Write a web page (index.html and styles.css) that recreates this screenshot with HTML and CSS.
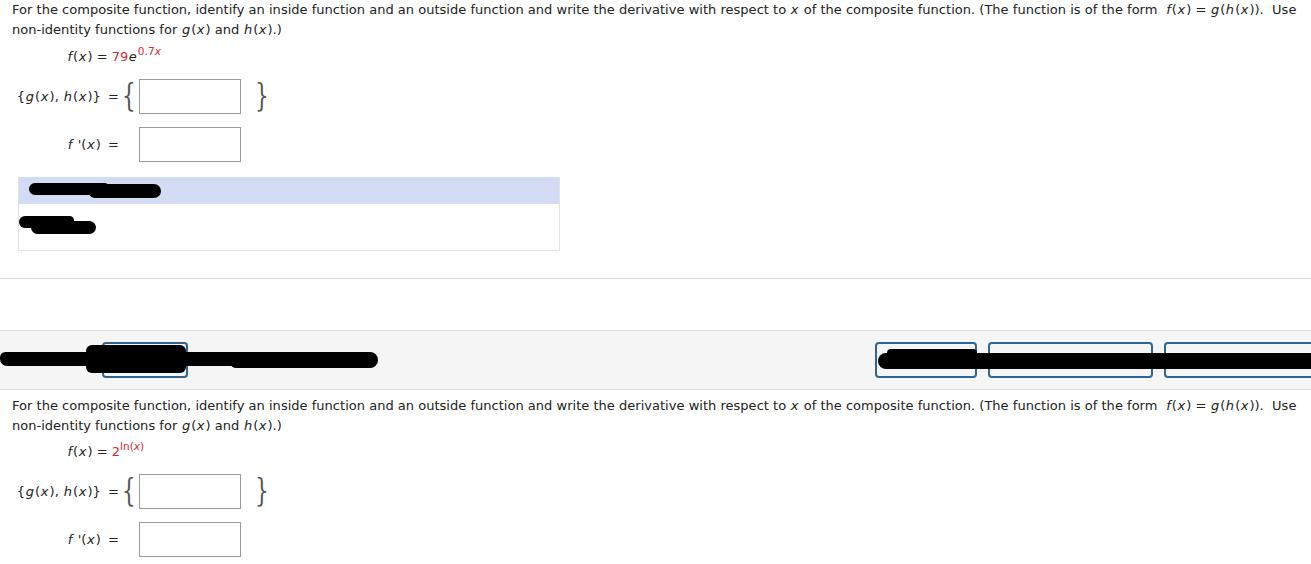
FILE: index.html
```html
<!DOCTYPE html>
<html>
<head>
<meta charset="utf-8">
<link rel="stylesheet" href="styles.css">
</head>
<body>
<section class="question q1">
  <p class="prompt">For the composite function, identify an inside function and an outside function and write the derivative with respect to <i>x</i> of the composite function. (The function is of the form&nbsp; <i>f</i>(<i>x</i>) = <i>g</i>(<i>h</i>(<i>x</i>)).&nbsp; Use non-identity functions for <i>g</i>(<i>x</i>) and <i>h</i>(<i>x</i>).)</p>
  <div class="formula"><i>f</i>(<i>x</i>) = <span class="red">79</span><i>e</i><sup class="red">0.7<i>x</i></sup></div>
  <div class="row">
    <span class="label">{<i>g</i>(<i>x</i>), <i>h</i>(<i>x</i>)}</span><span class="eq">=</span><span class="brace">{</span><span class="box"></span><span class="brace close">}</span>
  </div>
  <div class="row">
    <span class="label"><i>f</i> '(<i>x</i>)</span><span class="eq">=</span><span class="brace"></span><span class="box"></span>
  </div>
  <div class="hint">
    <div class="hint-head"><span class="blob b1"></span><span class="blob b1b"></span></div>
    <div class="hint-body"><span class="blob b2"></span><span class="blob b2b"></span></div>
  </div>
</section>
<hr class="sep">
<div class="toolbar">
  <div class="tools-left">
    <span class="btn btn-a"></span>
    <span class="blob b3"></span>
    <span class="blob b3b"></span>
    <span class="blob b3c"></span>
  </div>
  <div class="tools-right">
    <span class="btn btn-b"></span>
    <span class="btn btn-c"></span>
    <span class="btn btn-d"></span>
    <span class="blob b4"></span>
    <span class="blob b4b"></span>
  </div>
</div>
<section class="question q2">
  <p class="prompt">For the composite function, identify an inside function and an outside function and write the derivative with respect to <i>x</i> of the composite function. (The function is of the form&nbsp; <i>f</i>(<i>x</i>) = <i>g</i>(<i>h</i>(<i>x</i>)).&nbsp; Use non-identity functions for <i>g</i>(<i>x</i>) and <i>h</i>(<i>x</i>).)</p>
  <div class="formula"><i>f</i>(<i>x</i>) = <span class="red">2</span><sup class="red">ln(<i>x</i>)</sup></div>
  <div class="row">
    <span class="label">{<i>g</i>(<i>x</i>), <i>h</i>(<i>x</i>)}</span><span class="eq">=</span><span class="brace">{</span><span class="box"></span><span class="brace close">}</span>
  </div>
  <div class="row">
    <span class="label"><i>f</i> '(<i>x</i>)</span><span class="eq">=</span><span class="brace"></span><span class="box"></span>
  </div>
</section>
</body>
</html>
```

FILE: styles.css
```css
html, body {
  margin: 0;
  padding: 0;
  background: #fff;
}
body {
  font-family: "DejaVu Sans", Verdana, sans-serif;
  font-size: 13px;
  letter-spacing: 0.02px;
  color: #222;
  overflow: hidden;
}
i {
  padding: 0 1px 0 0.5px;
}
sup i {
  padding: 0;
}
.question {
  padding: 0 12px;
}
.prompt {
  margin: 0;
  line-height: 20px;
}
.formula {
  margin: 7px 0 0 55px;
  line-height: 20px;
  height: 20px;
}
.formula sup {
  font-size: 10.5px;
  vertical-align: 6px;
  line-height: 0;
}
.red {
  color: #d22a36;
}
.row {
  display: flex;
  align-items: center;
  height: 35px;
  margin-top: 12px;
}
.row + .row {
  margin-top: 13px;
}
.label {
  width: 89px;
  text-align: right;
  letter-spacing: 0.1px;
}
.eq {
  margin: 0 3px 0 7px;
}
.brace {
  width: 17px;
  font-family: "DejaVu Serif", serif;
  font-weight: 200;
  font-size: 31px;
  line-height: 35px;
  color: #555;
  transform: scale(0.7, 1.05);
  transform-origin: left center;
  text-align: left;
  margin-top: -4px;
}
.brace.close {
  margin-left: 14px;
}
.box {
  width: 100px;
  height: 33px;
  border: 1px solid #9a9a9a;
  background: #fff;
}
.hint {
  margin: 15px 0 0 6px;
  width: 540px;
  border: 1px solid #e2e2e2;
  border-top: none;
}
.hint-head {
  position: relative;
  height: 27px;
  background: #d4dcf5;
}
.hint-body {
  position: relative;
  height: 46px;
  background: #fff;
}
.blob {
  position: absolute;
  background: #000;
  border-radius: 8px;
}
.b1 {
  left: 10px;
  top: 6px;
  width: 80px;
  height: 12px;
  border-radius: 8px 6px 4px 8px;
}
.b1b {
  left: 70px;
  top: 7px;
  width: 72px;
  height: 14px;
  border-radius: 4px 10px 10px 8px;
}
.b2 {
  left: 0;
  top: 12px;
  width: 55px;
  height: 12px;
  border-radius: 8px 6px 6px 8px;
}
.b2b {
  left: 12px;
  top: 17px;
  width: 65px;
  height: 13px;
  border-radius: 6px 8px 8px 8px;
}
.sep {
  margin: 27px 0 0;
  border: none;
  border-top: 1px solid #d8d8d8;
  height: 0;
}
.toolbar {
  margin-top: 51px;
  height: 58px;
  background: #f5f5f5;
  border-top: 1px solid #dedede;
  border-bottom: 1px solid #dedede;
  display: flex;
  justify-content: space-between;
  align-items: center;
}
.tools-left {
  position: relative;
  display: flex;
  padding-left: 102px;
  height: 36px;
  width: 300px;
}
.tools-right {
  position: relative;
  display: flex;
  gap: 11px;
  margin-right: -27px;
  height: 36px;
}
.btn {
  display: block;
  height: 32px;
  border: 2px solid #2e6592;
  border-radius: 4px;
  box-sizing: content-box;
}
.btn-a { width: 82px; }
.btn-b { width: 98px; }
.btn-c { width: 161px; }
.btn-d { width: 170px; }
.b3 {
  left: 0;
  top: 10px;
  width: 240px;
  height: 14px;
  border-radius: 6px 10px 6px 8px;
}
.b3b {
  left: 86px;
  top: 3px;
  width: 100px;
  height: 28px;
  border-radius: 6px;
}
.b3c {
  left: 230px;
  top: 10px;
  width: 148px;
  height: 16px;
  border-radius: 4px 10px 10px 8px;
}
.b4 {
  left: 3px;
  top: 11px;
  width: 460px;
  height: 16px;
  border-radius: 8px 4px 6px 8px;
}
.b4b {
  left: 12px;
  top: 7px;
  width: 90px;
  height: 10px;
  border-radius: 4px;
}
.q2 {
  padding-top: 6px;
}
.q2 .formula {
  margin-top: 6px;
}
```
